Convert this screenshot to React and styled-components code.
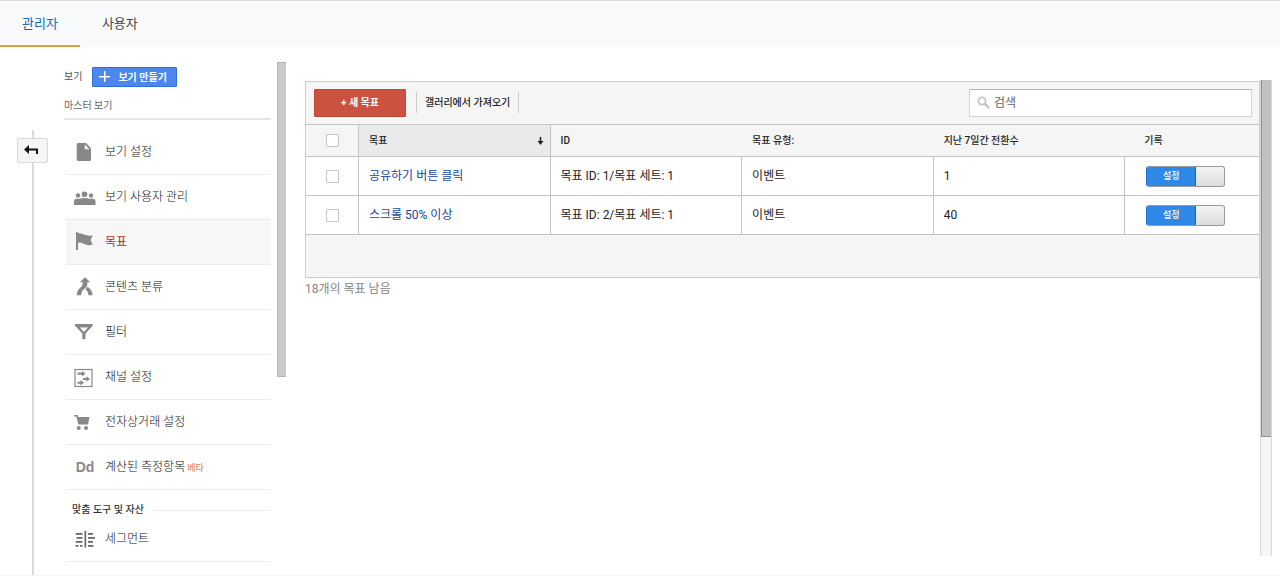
import { useState } from 'react';
import styled, { createGlobalStyle } from 'styled-components';

const GlobalStyle = createGlobalStyle`
    * {
        box-sizing: border-box;
    }

    body {
        margin: 0;
        background: #fff;
        color: #222;
        font-family: Roboto, 'Noto Sans CJK KR', sans-serif;
        font-size: 12px;
        line-height: 16px;
    }

    button,
    input {
        margin: 0;
        font-family: inherit;
    }
`;

const Page = styled.div`
    display: flex;
    flex-direction: column;
    height: 100vh;
    overflow: hidden;
    border-top: 1px solid #dcdde0;
    border-bottom: 1px solid #f5f5f5;
`;

const Tabs = styled.nav`
    display: flex;
    flex: none;
    height: 46px;
    background: #f9fafc;
`;

const Tab = styled.a`
    padding: 14px 22px 0;
    border-bottom: 2px solid ${(props) => (props.$active ? '#e0a040' : 'transparent')};
    color: ${(props) => (props.$active ? '#1a66b8' : '#444')};
    font-size: 13px;
    line-height: 18px;
    text-decoration: none;
`;

const Body = styled.div`
    display: flex;
    flex: 1;
    min-height: 0;
`;

const Rail = styled.div`
    display: flex;
    flex: none;
    flex-direction: column;
    width: 64px;
    padding: 83px 0 0 17px;
`;

const RailLine = styled.div`
    flex: ${(props) => (props.$short ? '0 0 8px' : '1')};
    width: 2px;
    margin-left: 15px;
    background: #dadada;
`;

const BackButton = styled.button`
    display: flex;
    align-items: center;
    justify-content: center;
    width: 31px;
    height: 25px;
    padding: 0 4px 2px 0;
    border: 1px solid #d9d9d9;
    border-radius: 2px;
    background: #f5f5f5;
`;

const Sidebar = styled.aside`
    flex: none;
    width: 207px;
    padding-top: 20px;
`;

const ViewHead = styled.div`
    display: flex;
    align-items: center;
    gap: 10px;
    color: #555;
    font-size: 10px;
`;

const CreateButton = styled.button`
    display: flex;
    align-items: center;
    gap: 8px;
    height: 20px;
    padding: 0 9px 1px 6px;
    border: 1px solid #2f6fd6;
    border-radius: 1px;
    background: #4d87ee;
    color: #fff;
    font-size: 10px;
    font-weight: 700;
`;

const ViewName = styled.div`
    padding: 11px 0 4px;
    border-bottom: 2px solid #e6e6e6;
    color: #666;
    font-size: 10px;
`;

const NavList = styled.ul`
    margin: 0 0 0 2px;
    padding: ${(props) => (props.$first ? '10px' : '0')} 0 0;
    list-style: none;
`;

const NavItem = styled.li`
    border-bottom: 1px solid #ececec;
    background: ${(props) => (props.$active ? '#f7f7f7' : 'transparent')};
`;

const NavLink = styled.a`
    display: grid;
    grid-template-columns: 22px 1fr;
    align-items: center;
    gap: 9px;
    height: 44px;
    padding-left: 8px;
    color: ${(props) => (props.$active ? '#b03020' : '#111')};
    font-weight: ${(props) => (props.$active ? 400 : 300)};
    text-decoration: none;

    svg {
        display: block;
    }
`;

const Beta = styled.small`
    margin-left: 2px;
    color: #dd7d4f;
    font-size: 9px;
    font-weight: 400;
`;

const NavHeading = styled.h2`
    display: flex;
    align-items: center;
    gap: 9px;
    margin: 12px 0 -1px 8px;
    color: #333;
    font-size: 10px;
    font-weight: 500;

    &::after {
        flex: 1;
        height: 1px;
        background: #ececec;
        content: '';
    }
`;

const SideScroll = styled.div`
    flex: none;
    width: 9px;
    height: 315px;
    margin: 15px 19px 0 6px;
    border: 1px solid #b8b8b8;
    border-width: 1px 0 1px 1px;
    background: #cbcbcb;
`;

const Main = styled.main`
    flex: 1;
    min-width: 0;
    padding-top: 34px;
`;

const Card = styled.section`
    border: 1px solid #ccc;
    background: #f5f5f5;
`;

const Toolbar = styled.div`
    display: flex;
    align-items: center;
    height: 42px;
    padding: 0 7px 1px 8px;
`;

const NewGoalButton = styled.button`
    width: 92px;
    height: 28px;
    padding: 0 0 2px;
    border: 1px solid #bf4734;
    border-radius: 1px;
    background: #cb5140;
    color: #fff;
    font-size: 10px;
    font-weight: 700;
`;

const ImportButton = styled.button`
    height: 21px;
    margin-left: 10px;
    padding: 0 8px 3px;
    border: solid #ccc;
    border-width: 0 1px;
    background: transparent;
    color: #222;
    font-size: 10px;
    font-weight: 500;
`;

const SearchBox = styled.label`
    display: flex;
    align-items: center;
    gap: 4px;
    width: 283px;
    height: 28px;
    margin-left: auto;
    padding: 0 7px;
    border: 1px solid #d6d6d6;
    border-top-color: #b5b5b5;
    background: #fff;
`;

const SearchInput = styled.input`
    flex: 1;
    min-width: 0;
    padding: 0;
    border: 0;
    outline: 0;
    background: transparent;
    font-size: 12px;

    &::placeholder {
        color: #666;
        opacity: 1;
    }
`;

const Table = styled.table`
    width: 100%;
    border-spacing: 0;
    table-layout: fixed;
`;

const Th = styled.th`
    width: ${(props) => props.$width || 'auto'};
    height: 33px;
    padding: 0 9px ${(props) => (props.$last ? '0 19px' : '0 10px')};
    border: solid #c4c4c4;
    border-width: 1px ${(props) => (props.$sorted ? '1px' : '0')} 1px 0;
    background: ${(props) => (props.$sorted ? '#eaeaea' : 'transparent')};
    font-size: 10px;
    font-weight: 500;
    text-align: left;
`;

const SortButton = styled.button`
    display: flex;
    align-items: center;
    justify-content: space-between;
    width: 100%;
    padding: 0;
    border: 0;
    background: transparent;
    color: inherit;
    font-size: 10px;
    font-weight: 500;
    line-height: 16px;

    svg {
        margin-right: -3px;
    }
`;

const Td = styled.td`
    height: 39px;
    padding: 0 0 0 ${(props) => (props.$last ? '21px' : '10px')};
    border: solid #c4c4c4;
    border-width: 0 ${(props) => (props.$last ? '0' : '1px')} 1px 0;
    background: #fff;

    a {
        color: #15479e;
        text-decoration: none;
    }
`;

const CheckCell = styled(Td)`
    padding: 0;
    text-align: center;
`;

const CheckHead = styled(Th)`
    padding: 0;
    border-right-width: 1px;
    text-align: center;
`;

const Checkbox = styled.input.attrs({ type: 'checkbox' })`
    display: block;
    width: 13px;
    height: 13px;
    margin: 0 auto;
    border: 1px solid #c6c6c6;
    border-radius: 1px;
    appearance: none;
    background: #fff;

    &:checked {
        background: #4d87ee;
    }
`;

const Switch = styled.button`
    display: flex;
    width: 79px;
    height: 21px;
    padding: 0;
    overflow: hidden;
    border: 1px solid #999;
    border-left-color: #1f6fca;
    border-radius: 3px;
    background: linear-gradient(#f4f4f4, #dcdcdc);
`;

const SwitchOn = styled.span`
    width: 49px;
    margin-left: ${(props) => (props.$on ? '0' : '28px')};
    border: solid #1c66b8;
    border-width: 0 1px 0 0;
    background: ${(props) => (props.$on ? '#2e88e6' : '#bbb')};
    color: #fff;
    font-size: 9px;
    font-weight: 500;
    line-height: 19px;
`;

const CardFoot = styled.div`
    height: 42px;
`;

const Remaining = styled.p`
    margin: 3px 0 0;
    color: #858585;
`;

const PageScroll = styled.div`
    flex: none;
    width: 12px;
    margin: 33px 8px 19px 0;
    border: solid #d9d9d9;
    border-width: 0 1px;
    background: #f5f5f5;
`;

const PageThumb = styled.div`
    height: 75%;
    border: solid #8f8f8f;
    border-width: 0 0 1px 1px;
    background: #c2c2c2;
`;

const Dd = styled.span`
    color: #888;
    font-family: 'Liberation Sans', sans-serif;
    font-size: 14px;
    font-weight: 700;
    text-align: center;
`;

const Icon = ({ children }) => (
    <svg width="22" height="22" viewBox="0 0 22 22" fill="#888" aria-hidden="true">
        {children}
    </svg>
);

const FileIcon = () => (
    <Icon>
        <path fillRule="evenodd" d="M4 2H12L17 7V18.500Q17 20 15.500 20H4Q2.700 20 2.700 18.500V3.500Q2.700 2 4 2ZM10.800 3.500V8.300H15.600Z" />
    </Icon>
);

const UsersIcon = () => (
    <Icon>
        <circle cx="4" cy="9.500" r="2.200" />
        <circle cx="10.500" cy="8.300" r="2.800" />
        <circle cx="17" cy="9.500" r="2.200" />
        <path d="M0 19V15Q0 13 2 12.800H6Q8 12 10.500 12T15 12.800H19Q21.500 13 21.500 15V19Z" />
    </Icon>
);

const FlagIcon = () => (
    <Icon>
        <path d="M2 1H3.700V2Q7 2 10 3.500T18.700 4.500L16.500 9L18.700 13.500Q14 15 10 13T4 11.800V19H2Z" />
    </Icon>
);

const MergeIcon = () => (
    <Icon>
        <path d="M11 1.200L16.200 6.300H13.300V9Q13 11.500 10 13.300Q7.200 15 7.200 19.200H2.700Q2.900 14.500 6 12Q8.700 10 8.700 7.500V6.300H5.800ZM13.700 10.800Q18.300 14 18.500 19.200H14.500Q14.300 15.500 11.500 13.200Z" />
    </Icon>
);

const FilterIcon = () => (
    <Icon>
        <path fillRule="evenodd" d="M1 3H18.700V4.800L11.500 12.500V18.200H8.300V12.500L1 4.800ZM5.800 6.500L9.900 11L14 6.500Z" />
    </Icon>
);

const ChannelIcon = () => (
    <Icon>
        <rect x="1" y="3.500" width="17" height="17" fill="none" stroke="#888" strokeWidth="1.200" />
        <path d="M3.500 6.500H8V5L11.500 7.700L8 10.400V8.800H3.500ZM9 12H12.500V10.300L16 13L12.500 15.700V14H9ZM3.500 15.700H6.500V14L10 16.700L6.500 19.400V17.700H3.500Z" />
    </Icon>
);

const CartIcon = () => (
    <Icon>
        <path d="M0 4H3.500L4.300 6H15.500L14 13.500H4.300L2.400 5.500H0Z" />
        <circle cx="4.700" cy="17" r="2" />
        <circle cx="12" cy="17" r="2" />
    </Icon>
);

const SegmentIcon = () => (
    <Icon>
        <path
            fill="#666"
            d="M10.500 3H12.200V19.500H10.500ZM1.700 5H8.500V6.800H1.700ZM2.700 9H8.500V10.800H2.700ZM1.700 13H8.500V14.800H1.700ZM1.700 17H4.500V18.800H1.700ZM6 17H8.500V18.800H6ZM14 5H19V6.800H14ZM14 9H21V10.800H14ZM14 13H19V14.800H14ZM14 17H19.500V18.800H14Z"
        />
    </Icon>
);

const DdIcon = () => <Dd>Dd</Dd>;

const MENU = [
    { label: '보기 설정', icon: FileIcon },
    { label: '보기 사용자 관리', icon: UsersIcon },
    { label: '목표', icon: FlagIcon, active: true },
    { label: '콘텐츠 분류', icon: MergeIcon },
    { label: '필터', icon: FilterIcon },
    { label: '채널 설정', icon: ChannelIcon },
    { label: '전자상거래 설정', icon: CartIcon },
    { label: '계산된 측정항목', icon: DdIcon, beta: true },
];

const ASSETS = [{ label: '세그먼트', icon: SegmentIcon }];

const GOALS = [
    { id: 1, name: '공유하기 버튼 클릭', set: '목표 ID: 1/목표 세트: 1', type: '이벤트', conversions: 1 },
    { id: 2, name: '스크롤 50% 이상', set: '목표 ID: 2/목표 세트: 1', type: '이벤트', conversions: 40 },
];

function Menu({ items, first }) {
    return (
        <NavList $first={first}>
            {items.map(({ label, icon: ItemIcon, active, beta }) => (
                <NavItem key={label} $active={active}>
                    <NavLink href="#" $active={active}>
                        <ItemIcon />
                        <span>
                            {label}
                            {beta && <Beta>베타</Beta>}
                        </span>
                    </NavLink>
                </NavItem>
            ))}
        </NavList>
    );
}

function GoalRow({ goal }) {
    const [on, setOn] = useState(true);

    return (
        <tr>
            <CheckCell>
                <Checkbox aria-label={goal.name} />
            </CheckCell>
            <Td>
                <a href="#">{goal.name}</a>
            </Td>
            <Td>{goal.set}</Td>
            <Td>{goal.type}</Td>
            <Td>{goal.conversions}</Td>
            <Td $last>
                <Switch type="button" role="switch" aria-checked={on} onClick={() => setOn(!on)}>
                    <SwitchOn $on={on}>{on ? '설정' : '해제'}</SwitchOn>
                </Switch>
            </Td>
        </tr>
    );
}

function App() {
    const [query, setQuery] = useState('');
    const goals = GOALS.filter((goal) => goal.name.includes(query));

    return (
        <Page>
            <GlobalStyle />
            <Tabs>
                <Tab href="#" $active>
                    관리자
                </Tab>
                <Tab href="#">사용자</Tab>
            </Tabs>
            <Body>
                <Rail>
                    <RailLine $short />
                    <BackButton type="button" aria-label="뒤로">
                        <svg width="14" height="10" viewBox="0 0 14 10" fill="#111" aria-hidden="true">
                            <path d="M0 4.500L5 0V3.500H14V9H12V5.500H5V9Z" />
                        </svg>
                    </BackButton>
                    <RailLine />
                </Rail>
                <Sidebar>
                    <ViewHead>
                        <span>보기</span>
                        <CreateButton type="button">
                            <svg width="11" height="11" viewBox="0 0 11 11" fill="#fff" aria-hidden="true">
                                <path d="M5 0H6.500V5H11V6.500H6.500V11H5V6.500H0V5H5Z" />
                            </svg>
                            보기 만들기
                        </CreateButton>
                    </ViewHead>
                    <ViewName>마스터 보기</ViewName>
                    <Menu items={MENU} first />
                    <NavHeading>맞춤 도구 및 자산</NavHeading>
                    <Menu items={ASSETS} />
                </Sidebar>
                <SideScroll />
                <Main>
                    <Card>
                        <Toolbar>
                            <NewGoalButton type="button">+ 새 목표</NewGoalButton>
                            <ImportButton type="button">갤러리에서 가져오기</ImportButton>
                            <SearchBox>
                                <svg width="13" height="13" viewBox="0 0 13 13" fill="none" stroke="#c4c4c4" aria-hidden="true">
                                    <circle cx="5" cy="5" r="3.700" strokeWidth="1.800" />
                                    <path d="M7.800 7.800L12 12" strokeWidth="2.400" />
                                </svg>
                                <SearchInput
                                    type="text"
                                    aria-label="검색"
                                    placeholder="검색"
                                    value={query}
                                    onChange={(e) => setQuery(e.target.value)}
                                />
                            </SearchBox>
                        </Toolbar>
                        <Table>
                            <thead>
                                <tr>
                                    <CheckHead $width="53px">
                                        <Checkbox aria-label="모두 선택" />
                                    </CheckHead>
                                    <Th $width="20.1%" $sorted>
                                        <SortButton type="button">
                                            목표
                                            <svg width="7" height="8" viewBox="0 0 7 8" fill="#222" aria-hidden="true">
                                                <path d="M2.700 0H4.300V4H6.500L3.500 8L0.500 4H2.700Z" />
                                            </svg>
                                        </SortButton>
                                    </Th>
                                    <Th $width="20.1%">ID</Th>
                                    <Th $width="20.1%">목표 유형:</Th>
                                    <Th $width="20.1%">지난 7일간 전환수</Th>
                                    <Th $last>기록</Th>
                                </tr>
                            </thead>
                            <tbody>
                                {goals.map((goal) => (
                                    <GoalRow key={goal.id} goal={goal} />
                                ))}
                            </tbody>
                        </Table>
                        <CardFoot />
                    </Card>
                    <Remaining>18개의 목표 남음</Remaining>
                </Main>
                <PageScroll>
                    <PageThumb />
                </PageScroll>
            </Body>
        </Page>
    );
}

export default App;
